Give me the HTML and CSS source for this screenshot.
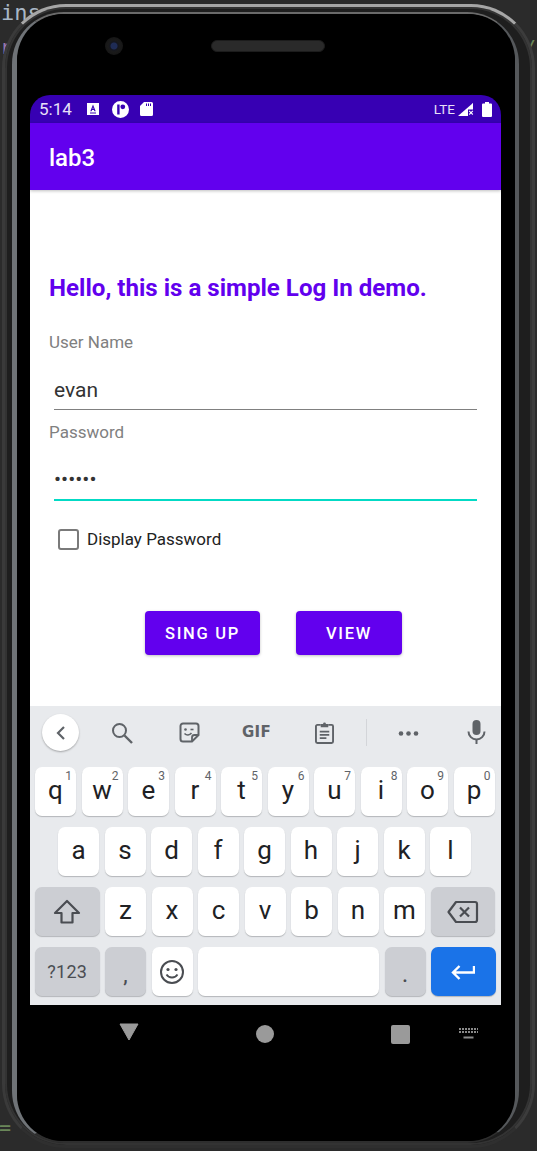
FILE: index.html
```html
<!DOCTYPE html>
<html lang="en">
<head>
<meta charset="utf-8">
<title>lab3</title>
<link rel="stylesheet" href="styles.css">
</head>
<body>
<div class="page">
  <div class="editor-bits">
    <span class="bit bit-ins">ins</span>
    <span class="bit bit-r">r</span>
    <span class="bit bit-a">/</span>
    <span class="bit bit-eq">=</span>
  </div>
  <div class="shell">
    <div class="ring">
      <div class="phone">
        <div class="earpiece">
          <div class="camera"></div>
          <div class="speaker"></div>
        </div>
        <div class="screen">
          <div class="status">
            <span class="time">5:14</span>
            <svg class="st-a" viewBox="0 0 12 12"><path fill="#fff" fill-rule="evenodd" d="M0 0h12v12H0z M6 1.600 3.300 8.200h1.300l.5-1.300h1.800l.5 1.300h1.300L6 1.600z M5.500 5.800 6 4.300l.5 1.500z M3 9.600v.8h6v-.8z"/></svg>
            <svg class="st-p" viewBox="0 0 17 17"><path fill="#fff" fill-rule="evenodd" d="M8.500 0a8.500 8.500 0 1 1 0 17a8.500 8.500 0 0 1 0-17z M5.200 3.400v10.200h2.400V3.400z M10.800 3.400a2.400 2.400 0 1 0 0 4.800a2.400 2.400 0 0 0 0-4.800z"/></svg>
            <svg class="st-sd" viewBox="0 0 13 14"><path fill="#fff" fill-rule="evenodd" d="M4 0h7.500A1.500 1.500 0 0 1 13 1.500V12.500A1.500 1.500 0 0 1 11.500 14H1.500A1.500 1.500 0 0 1 0 12.500V4z M6 1.500v2.500h1V1.500z M8 1.500v2.500h1V1.500z M10 1.500v2.500h1V1.500z"/></svg>
            <span class="lte">LTE</span>
            <svg class="st-sig" viewBox="0 0 16 13"><path fill="#fff" d="M15 0v13H0z"/><path fill="#3700b3" d="M10 6.500h6V13h-6z"/><path fill="#fff" d="M15 0v6h-3z"/><path fill="#fff" d="M10.800 8.300l.8-.8 1.400 1.400 1.400-1.400.8.800-1.400 1.400 1.400 1.400-.8.800-1.400-1.400-1.400 1.400-.8-.8 1.400-1.400z"/></svg>
            <svg class="st-bat" viewBox="0 0 10 15"><path fill="#fff" d="M3 0h4v1.500h2a1 1 0 0 1 1 1V14a1 1 0 0 1-1 1H1a1 1 0 0 1-1-1V2.500a1 1 0 0 1 1-1h2z"/></svg>
          </div>
          <div class="appbar">lab3</div>
          <main class="content">
            <h1 class="hello">Hello, this is a simple Log In demo.</h1>
            <div class="label label-user">User Name</div>
            <div class="field field-user">evan</div>
            <div class="label label-pass">Password</div>
            <div class="field field-pass">••••••</div>
            <div class="check-row">
              <span class="checkbox"></span>
              <span class="check-label">Display Password</span>
            </div>
            <div class="buttons">
              <span class="btn btn-sign">SING UP</span>
              <span class="btn btn-view">VIEW</span>
            </div>
          </main>
          <div class="keyboard">
            <div class="toolbar">
              <span class="back"><svg width="12" height="16" viewBox="0 0 12 16"><path d="M9 2 3 8l6 6" fill="none" stroke="#5f6368" stroke-width="2.200"/></svg></span>
              <svg class="tb tb-search" viewBox="0 0 22 22"><circle cx="8.500" cy="8.500" r="6.500" fill="none" stroke="#5f6368" stroke-width="2"/><path d="M13.500 13.500 21 21" stroke="#5f6368" stroke-width="2.400"/></svg>
              <svg class="tb tb-sticker" viewBox="0 0 21 21"><path d="M4 1.500h13A2.500 2.500 0 0 1 19.500 4v9L13 19.500H4A2.500 2.500 0 0 1 1.500 17V4A2.500 2.500 0 0 1 4 1.500z" fill="none" stroke="#5f6368" stroke-width="2"/><path d="M13 19v-3.500a2.500 2.500 0 0 1 2.500-2.500H19" fill="none" stroke="#5f6368" stroke-width="1.800"/><circle cx="6.500" cy="7.500" r="1.300" fill="#5f6368"/><path d="M11.500 7.500h3" stroke="#5f6368" stroke-width="1.600"/><path d="M5.500 11.500c2 2 5 2 7-.5" fill="none" stroke="#5f6368" stroke-width="1.600"/></svg>
              <span class="gif">GIF</span>
              <svg class="tb tb-clip" viewBox="0 0 20 24"><path d="M6 4H2.500A1.500 1.500 0 0 0 1 5.500v16A1.500 1.500 0 0 0 2.500 23h15a1.500 1.500 0 0 0 1.500-1.500v-16A1.500 1.500 0 0 0 17.500 4H14" fill="none" stroke="#5f6368" stroke-width="2"/><path d="M6 6.500V3h2.500a1.500 1.500 0 0 1 3 0H14v3.500z" fill="#5f6368"/><path d="M5 11h10M5 14.500h10M5 18h7" stroke="#5f6368" stroke-width="1.800"/></svg>
              <span class="tb-divider"></span>
              <svg class="tb tb-more" viewBox="0 0 21 5"><circle cx="3" cy="2.500" r="2.300" fill="#5f6368"/><circle cx="10.500" cy="2.500" r="2.300" fill="#5f6368"/><circle cx="18" cy="2.500" r="2.300" fill="#5f6368"/></svg>
              <svg class="tb tb-mic" viewBox="0 0 19 24"><rect x="5.500" y="0" width="8" height="15" rx="4" fill="#5f6368"/><path d="M1.500 11.500a8 8 0 0 0 16 0" fill="none" stroke="#5f6368" stroke-width="2"/><path d="M9.500 19v5" stroke="#5f6368" stroke-width="2"/></svg>
            </div>
            <div class="row row-1">
              <span class="key"><b>q</b><i>1</i></span>
              <span class="key"><b>w</b><i>2</i></span>
              <span class="key"><b>e</b><i>3</i></span>
              <span class="key"><b>r</b><i>4</i></span>
              <span class="key"><b>t</b><i>5</i></span>
              <span class="key"><b>y</b><i>6</i></span>
              <span class="key"><b>u</b><i>7</i></span>
              <span class="key"><b>i</b><i>8</i></span>
              <span class="key"><b>o</b><i>9</i></span>
              <span class="key"><b>p</b><i>0</i></span>
            </div>
            <div class="row row-2">
              <span class="key"><b>a</b></span>
              <span class="key"><b>s</b></span>
              <span class="key"><b>d</b></span>
              <span class="key"><b>f</b></span>
              <span class="key"><b>g</b></span>
              <span class="key"><b>h</b></span>
              <span class="key"><b>j</b></span>
              <span class="key"><b>k</b></span>
              <span class="key"><b>l</b></span>
            </div>
            <div class="row row-3">
              <span class="key key-wide key-grey"><svg width="28" height="26" viewBox="0 0 28 26"><path d="M14 2 2 14h6.500v9.500h11V14H26z" fill="none" stroke="#4a4d52" stroke-width="2.200" stroke-linejoin="round"/></svg></span>
              <span class="key"><b>z</b></span>
              <span class="key"><b>x</b></span>
              <span class="key"><b>c</b></span>
              <span class="key"><b>v</b></span>
              <span class="key"><b>b</b></span>
              <span class="key"><b>n</b></span>
              <span class="key"><b>m</b></span>
              <span class="key key-wide key-grey"><svg width="32" height="24" viewBox="0 0 32 24"><path d="M9 2h19a2 2 0 0 1 2 2v16a2 2 0 0 1-2 2H9L1.500 12z" fill="none" stroke="#4a4d52" stroke-width="2.200" stroke-linejoin="round"/><path d="M13 7.500l9 9M22 7.500l-9 9" stroke="#4a4d52" stroke-width="2.200"/></svg></span>
            </div>
            <div class="row row-4">
              <span class="key key-wide key-grey key-sym">?123</span>
              <span class="key key-grey key-punct">,</span>
              <span class="key"><svg width="26" height="26" viewBox="0 0 26 26"><circle cx="13" cy="13" r="11" fill="none" stroke="#4a4d52" stroke-width="2"/><circle cx="9" cy="10.500" r="1.600" fill="#4a4d52"/><circle cx="17" cy="10.500" r="1.600" fill="#4a4d52"/><path d="M7.500 15.500c2.500 4 8.500 4 11 0" fill="none" stroke="#4a4d52" stroke-width="1.800"/></svg></span>
              <span class="key key-space"></span>
              <span class="key key-grey key-punct">.</span>
              <span class="key key-wide key-enter"><svg width="24" height="16" viewBox="0 0 24 16"><path d="M23 2v6.500H3M8.500 2 2 8.500 8.500 15" fill="none" stroke="#fff" stroke-width="2.400"/></svg></span>
            </div>
          </div>
          <div class="nav">
            <svg class="nav-back" viewBox="0 0 20 18"><path d="M1 1h18L10 17z" fill="#9a9a9a" stroke="#9a9a9a" stroke-width="1" stroke-linejoin="round"/></svg>
            <span class="nav-home"></span>
            <span class="nav-recent"></span>
            <svg class="nav-kb" viewBox="0 0 19 11"><path d="M0 1h19M0 4h19" stroke="#8a8a8a" stroke-width="2" stroke-dasharray="2 1"/><path d="M4.500 9.500h10" stroke="#8a8a8a" stroke-width="2"/></svg>
          </div>
        </div>
      </div>
    </div>
  </div>
</div>
</body>
</html>
```
FILE: styles.css
```css
* { box-sizing: border-box; }
html, body { margin: 0; padding: 0; background: #2b2b2b; }
.page {
  position: relative;
  width: 537px;
  height: 1151px;
  overflow: hidden;
  background: #2b2b2b;
  padding: 4px 2px 3px 2px;
  font-family: Roboto, "Liberation Sans", sans-serif;
}

/* IDE text peeking out behind the emulator frame */
.editor-bits { position: absolute; inset: 0; font-family: "DejaVu Sans Mono", monospace; }
.bit { position: absolute; line-height: 1; }
.bit-ins { left: 1px; top: 2px; font-size: 22px; color: #a9b7c6; }
.bit-r { left: 0; top: 37px; font-size: 20px; color: #9876aa; }
.bit-a { left: 524px; top: 37px; font-size: 20px; color: #6a8759; }
.bit-eq { left: -1px; top: 1117px; font-size: 20px; color: #6a8759; }

/* emulator frame */
.shell {
  position: relative;
  height: 100%;
  border: 3px solid;
  border-color: #a6a6a6 #3c3c3c #2f2f2f #3a3a3a;
  border-radius: 64px;
  background: #1e1e1e;
  padding: 5px 13px 2px 7px;
  box-shadow: inset 0 0 0 2px #333;
}
.ring {
  height: 100%;
  border: solid;
  border-width: 2px 4px 2px 5px;
  border-color: #6a6a6a #55585b #2e2e2e #6f7377;
  border-radius: 52px;
  background: #000;
}
.phone {
  height: 100%;
  background: #000;
  border-radius: 46px;
  padding: 0 14px 0 13px;
  display: flex;
  flex-direction: column;
}
.earpiece {
  flex: none;
  height: 81px;
  display: flex;
  align-items: flex-start;
  padding: 23px 0 0 75px;
  gap: 88px;
}
.camera {
  width: 18px;
  height: 18px;
  border-radius: 50%;
  background: radial-gradient(circle, #1f2c55 0 3px, #14161f 4px, #1a1a1a 6px, #161616 9px);
}
.speaker {
  width: 114px;
  height: 12px;
  margin-top: 3px;
  border-radius: 6px;
  background: #2a2a2a;
  border: 1px solid #1c1c1c;
}
.screen { flex: 1; display: flex; flex-direction: column; min-height: 0; }

/* status bar */
.status {
  flex: none;
  height: 28px;
  background: #3700b3;
  border-radius: 20px 20px 0 0;
  display: flex;
  align-items: center;
  color: #e8e0f8;
  padding: 0 9px 0 9px;
}
.time { font-size: 17px; width: 48px; }
.st-a { width: 12px; height: 12px; }
.st-p { width: 17px; height: 17px; margin-left: 13px; }
.st-sd { width: 13px; height: 14px; margin-left: 11px; }
.lte { margin-left: auto; font-size: 13.500px; }
.st-sig { width: 16px; height: 13px; margin-left: 3px; }
.st-bat { width: 10px; height: 15px; margin-left: 8px; }

.appbar {
  flex: none;
  height: 67px;
  background: #6200ee;
  color: #fff;
  font-size: 24px;
  font-weight: 500;
  line-height: 71px;
  padding-left: 19px;
  position: relative;
  box-shadow: 0 1px 3px rgba(0,0,0,.25);
}

/* form */
.content {
  flex: none;
  height: 516px;
  background: #fff;
  padding-left: 19px;
}
.hello {
  margin: 83px 0 0;
  font-size: 24.100px;
  font-weight: 700;
  line-height: 30px;
  color: #6200ee;
}
.label { font-size: 17px; line-height: 20px; color: #808080; }
.label-user { margin-top: 29px; }
.label-pass { margin-top: 12px; }
.field {
  width: 423px;
  margin-left: 5px;
  font-size: 21px;
  color: #333;
  border-bottom: 1px solid #808080;
}
.field-user { height: 58px; line-height: 77px; }
.field-pass { height: 59px; line-height: 74px; border-bottom: 2px solid #03dac5; }
.check-row { display: flex; align-items: center; margin: 27px 0 0 9px; height: 22px; }
.checkbox {
  width: 21px;
  height: 21px;
  border: 2.500px solid #7a7a7a;
  border-radius: 3px;
}
.check-label { margin-left: 8px; font-size: 17px; color: #222; }
.buttons { display: flex; margin: 61px 0 0 96px; gap: 36px; }
.btn {
  height: 44px;
  border-radius: 4px;
  background: #6200ee;
  color: #fff;
  font-size: 16.500px;
  font-weight: 500;
  letter-spacing: 1.700px;
  display: flex;
  align-items: center;
  justify-content: center;
  box-shadow: 0 1px 3px rgba(0,0,0,.25);
}
.btn-sign { width: 115px; }
.btn-view { width: 106px; }

/* keyboard */
.keyboard {
  flex: none;
  height: 299px;
  background: #e8eaed;
  padding: 0 5px;
}
.toolbar { position: relative; height: 61px; display: flex; align-items: center; }
.back {
  position: absolute;
  left: 7px;
  top: 8px;
  width: 37px;
  height: 37px;
  border-radius: 50%;
  background: #fff;
  box-shadow: 0 1px 2px rgba(0,0,0,.3);
  display: flex;
  align-items: center;
  justify-content: center;
}
.tb { position: absolute; }
.tb-search { left: 76px; top: 16px; width: 22px; height: 22px; }
.tb-sticker { left: 144px; top: 16px; width: 21px; height: 21px; }
.gif {
  position: absolute;
  left: 207px;
  top: 17px;
  font-family: "DejaVu Sans", sans-serif;
  font-size: 15px;
  font-weight: 700;
  letter-spacing: .3px;
  color: #5f6368;
}
.tb-clip { left: 280px; top: 15px; width: 19px; height: 23px; }
.tb-divider { position: absolute; left: 331px; top: 13px; width: 1px; height: 27px; background: #d3d5d9; }
.tb-more { left: 363px; top: 25px; width: 21px; height: 5px; }
.tb-mic { left: 432px; top: 14px; width: 19px; height: 24px; }

.row { display: flex; gap: 5.500px; height: 49px; margin-bottom: 11px; }
.row-2 { padding-left: 23px; }
.key {
  position: relative;
  width: 41px;
  height: 100%;
  flex: none;
  background: #fff;
  border-radius: 7px;
  box-shadow: 0 1px 1px rgba(60,64,67,.3);
  display: flex;
  align-items: center;
  justify-content: center;
  color: #202124;
}
.key b { font-weight: 400; font-size: 26px; line-height: 1; margin-bottom: 3px; }
.key i {
  position: absolute;
  right: 4px;
  top: 3px;
  font-style: normal;
  font-size: 12px;
  line-height: 1;
  color: #5f6368;
}
.key-wide { width: 64.500px; }
.key-grey { background: #ccced3; }
.key-sym { font-size: 18px; color: #4a4d52; letter-spacing: .3px; }
.key-punct { font-size: 20px; color: #4a4d52; align-items: flex-end; padding-bottom: 9px; font-weight: 500; }
.key-space { width: 181px; }
.key-enter { background: #1a73e8; }

/* nav bar */
.nav { flex: 1; position: relative; }
.nav-back { position: absolute; left: 89px; top: 18px; width: 20px; height: 18px; }
.nav-home { position: absolute; left: 226px; top: 20px; width: 18px; height: 18px; border-radius: 50%; background: #9a9a9a; }
.nav-recent { position: absolute; left: 361px; top: 20px; width: 19px; height: 19px; border-radius: 2px; background: #9a9a9a; }
.nav-kb { position: absolute; left: 429px; top: 23px; width: 19px; height: 11px; }
```
